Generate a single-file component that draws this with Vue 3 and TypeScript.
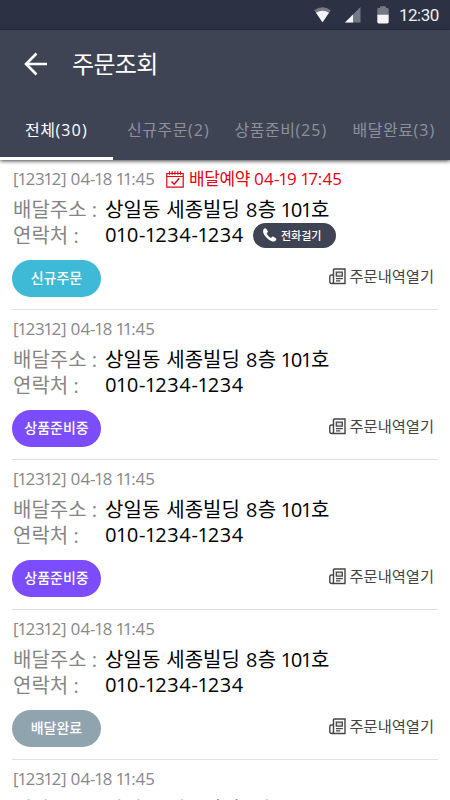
<script setup lang="ts">
interface Tab {
  label: string
  count: number
}

interface Order {
  status: 'new' | 'preparing' | 'done'
  label: string
  reservation?: string
  callable?: boolean
}

const tabs: Tab[] = [
  { label: '전체', count: 30 },
  { label: '신규주문', count: 2 },
  { label: '상품준비', count: 25 },
  { label: '배달완료', count: 3 },
]

const orders: Order[] = [
  { status: 'new', label: '신규주문', reservation: '04-19 17:45', callable: true },
  { status: 'preparing', label: '상품준비중' },
  { status: 'preparing', label: '상품준비중' },
  { status: 'done', label: '배달완료' },
  { status: 'done', label: '배달완료' },
]
</script>

<template>
  <div class="screen">
    <div class="status-bar">
      <svg class="wifi" width="17" height="16" viewBox="0 0 17 16">
        <path d="M.2 3.3Q8.5-2.6 16.8 3.3L8.5 15.2Z" fill="#757985" />
        <path d="M2 5.8Q8.5 1.6 15 5.8L8.5 15.2Z" fill="#f5f5f7" />
      </svg>
      <svg class="signal" width="16" height="16" viewBox="0 0 16 16">
        <path d="M0 15.5 15.5 0v15.5Z" fill="#757985" />
        <path d="M0 15.5 8 7.5v8Z" fill="#f5f5f7" />
      </svg>
      <svg class="battery" width="12" height="18" viewBox="0 0 12 18">
        <path d="M3 2V1.2Q3 .3 4 .3h4q1 0 1 .9V2h1.5q1.2 0 1.2 1.2V9H.3V3.2Q.3 2 1.5 2Z" fill="#757985" />
        <path d="M.3 8.7h11.4v7.1q0 1.6-1.6 1.6H1.9Q.3 17.4 .3 15.8Z" fill="#f5f5f7" />
      </svg>
      <span class="clock">12:30</span>
    </div>

    <header class="header">
      <div class="title-bar">
        <svg class="back" width="24" height="24" viewBox="0 0 24 24" fill="none" stroke="#fff" stroke-width="2.6">
          <path d="M23 12H2.5M12.5 1.5 2 12l10.5 10.5" />
        </svg>
        <h1 class="title">주문조회</h1>
      </div>
      <nav class="tabs">
        <a v-for="(tab, i) in tabs" :key="tab.label" class="tab" :class="{ active: i === 0 }">
          {{ tab.label }}<span class="count">({{ tab.count }})</span>
        </a>
      </nav>
    </header>

    <main class="list">
      <article v-for="(order, i) in orders" :key="i" class="order">
        <div class="meta">
          <span class="date">[12312] 04-18 11:45</span>
          <span v-if="order.reservation" class="reservation">
            <svg width="18" height="17" viewBox="0 0 18 17" fill="none" stroke="#e60012" stroke-width="1.2">
              <path d="M.8 2.5h16.4v13.7H.8ZM.8 5.5h16.4M3.5 .3v3.4M6.2 .3v3.4M9 .3v3.4M11.8 .3v3.4M14.5 .3v3.4" />
              <path d="m5.5 10.5 2.7 2.8 5-6" stroke-width="1.4" />
            </svg>
            <span class="reserved">배달예약 <span class="when">{{ order.reservation }}</span></span>
          </span>
        </div>
        <dl class="details">
          <dt>배달주소 :</dt>
          <dd class="address">상일동 세종빌딩 8층 101호</dd>
          <dt>연락처 :</dt>
          <dd class="contact">
            <span class="phone">010-1234-1234</span>
            <button v-if="order.callable" class="call">
              <svg width="14" height="14" viewBox="0 0 14 14" fill="#fff">
                <path d="M1 .8C1.7 0 2.6-.1 3.2 .7l1.5 2.2c.4 .6 .3 1-.2 1.5l-.7 .7c-.3 .4 .7 1.9 1.6 2.8s2.4 2.1 2.8 1.8l.8-.7c.5-.5 .9-.6 1.5-.2l2.3 1.5c.8 .6 .8 1.5 0 2.2-.9 .9-2.3 1.3-4 .7-2-.7-4-2.3-5.6-4C1.7 7.6 .3 5.7 .1 3.7 0 2.5 .3 1.5 1 .8Z" />
              </svg>
              <span>전화걸기</span>
            </button>
          </dd>
        </dl>
        <div class="actions">
          <span class="badge" :class="order.status">{{ order.label }}</span>
          <button class="open">
            <svg width="17" height="17" viewBox="0 0 17 17" fill="none" stroke="#444" stroke-width="1.4">
              <path d="M4.5 1H16v14.5H2.8Q.8 15.5 .8 13.5V8.5Q.8 7 2.5 7H4.5M4.5 1v12.5q0 2-1.7 2" />
              <path d="M7.3 4.2h6v4h-6Z" fill="#ddd" stroke-width="1.3" />
              <path d="M7 10.6h6.8M7 12.9h4.3" stroke-width="1.2" />
            </svg>
            <span>주문내역열기</span>
          </button>
        </div>
      </article>
    </main>
  </div>
</template>

<style>
body {
  overflow: hidden;
}
</style>

<style scoped>
.screen {
  width: 450px;
  height: 800px;
  overflow: hidden;
  display: flex;
  flex-direction: column;
  background: #fff;
  font-family: "Open Sans", "Noto Sans CJK KR", sans-serif;
  font-variant-numeric: proportional-nums;
}
.status-bar {
  box-sizing: border-box;
  flex: none;
  height: 30px;
  padding-right: 11px;
  display: flex;
  align-items: center;
  justify-content: flex-end;
  background: #2d3144;
}
.signal {
  margin-left: 14px;
}
.battery {
  margin: 0 10px 0 16px;
}
.clock {
  font: 17px/32px Roboto, sans-serif;
  letter-spacing: -0.5px;
  width: 40px;
  color: #eeeef0;
  white-space: nowrap;
}
.header {
  flex: none;
  height: 130px;
  background: #3f4455;
  position: relative;
  box-shadow: 0 1px 4px rgba(0, 0, 0, 0.75);
}
.title-bar {
  height: 67px;
  display: flex;
  align-items: center;
  padding: 0 24px;
  gap: 24px;
  box-sizing: border-box;
}
.title {
  margin: 0;
  font-size: 24px;
  line-height: 36px;
  font-weight: 400;
  letter-spacing: -0.7px;
  color: #fff;
}
.tabs {
  height: 63px;
  display: grid;
  grid-template-columns: 113px 111px 114px 112px;
}
.tab {
  box-sizing: border-box;
  height: 63px;
  border-bottom: 3px solid transparent;
  font-size: 16px;
  line-height: 67px;
  letter-spacing: 0.5px;
  text-align: center;
  white-space: nowrap;
  color: #8e919b;
}
.count {
  letter-spacing: 1.2px;
}
.tab.active {
  color: #fff;
  border-bottom-color: #fff;
}
.order {
  box-sizing: border-box;
  height: 150px;
  margin: 0 12px;
  padding-top: 6px;
  border-bottom: 1px solid #e0e0e0;
}
.meta {
  height: 26px;
  padding-left: 1px;
  display: flex;
  align-items: center;
  gap: 11px;
  font-size: 17px;
  line-height: 26px;
  white-space: nowrap;
}
.date {
  width: 142px;
  letter-spacing: -0.13px;
  color: #888;
}
.reservation {
  display: flex;
  align-items: center;
  gap: 5px;
  color: #e60012;
}
.reserved {
  letter-spacing: -0.4px;
}
.when {
  letter-spacing: 0.15px;
}
.details {
  margin: 4px 0 0;
  display: grid;
  grid-template-columns: 93px 1fr;
  font-size: 20px;
  line-height: 26px;
  white-space: nowrap;
}
dt {
  position: relative;
  top: 1px;
  padding-left: 1px;
  color: #858585;
}
dd {
  margin: 0;
  color: #000;
}
.address {
  position: relative;
  top: 1px;
  letter-spacing: 0.05px;
  word-spacing: 0.6px;
}
.contact {
  display: flex;
  align-items: center;
}
.phone {
  width: 148px;
  letter-spacing: 0.7px;
}
button {
  border: 0;
  padding: 0;
  background: none;
  font-family: inherit;
  white-space: nowrap;
  display: flex;
  align-items: center;
}
.call {
  box-sizing: border-box;
  width: 83px;
  height: 25px;
  padding-left: 10px;
  gap: 4px;
  border-radius: 13px;
  background: #3f4455;
  color: #fff;
  font-size: 11px;
  font-weight: 500;
}
.actions {
  margin-top: 12px;
  display: flex;
  justify-content: space-between;
  align-items: flex-start;
}
.badge {
  width: 89px;
  height: 37px;
  border-radius: 19px;
  font-size: 14px;
  line-height: 36px;
  font-weight: 500;
  text-align: center;
  color: #fff;
}
.badge.new {
  background: #3eb9d6;
}
.badge.preparing {
  background: #7c4dff;
}
.badge.done {
  background: #90a4b0;
}
.open {
  height: 33px;
  margin-right: 4px;
  gap: 4px;
  font-size: 15.3px;
  color: #444;
}
.open span {
  line-height: 29px;
}
</style>
